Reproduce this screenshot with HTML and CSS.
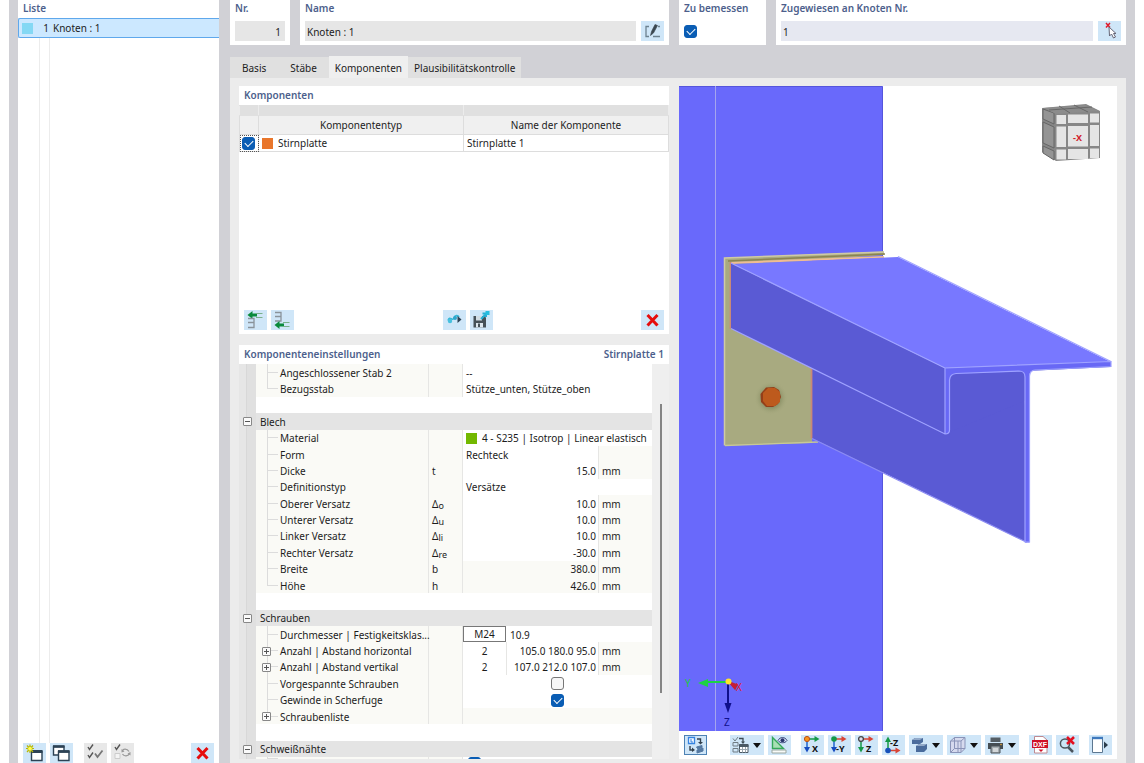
FILE: index.html
```html
<!DOCTYPE html>
<html lang="de">
<head>
<meta charset="utf-8">
<title>Stahlanschluss bearbeiten</title>
<link rel="stylesheet" href="styles.css">
</head>
<body>
<div class="app">
  <aside class="list">
    <h2 class="title">Liste</h2>
    <div class="list-body">
      <button class="list-item" type="button"><span class="swatch swatch-cyan"></span><span class="list-nr">1</span><span class="list-name">Knoten : 1</span></button>
    </div>
    <div class="bar list-bar">
      <button class="tool" type="button" aria-label="Neu"><svg viewBox="0 0 23 20"><path d="M8.500 8.500H19V17.500H8.500z" fill="#fff" stroke="#2c4254" stroke-width="1.400"/><path d="M8 8.500H19.500" stroke="#2c4254" stroke-width="3"/><path d="M7 1.500V10M3 5.500H11M4 2.500L10 9M10 2.500L4 9" stroke="#b8b800" stroke-width="1.200"/><circle cx="7" cy="5.700" r="2.300" fill="#ffff50" stroke="#a9a800" stroke-width=".6"/></svg></button>
      <button class="tool" type="button" aria-label="Kopieren"><svg viewBox="0 0 23 20"><path d="M3.500 3.500H14V12H3.500z" fill="#fff" stroke="#2c4254" stroke-width="1.400"/><path d="M3 3.500H14.500" stroke="#2c4254" stroke-width="2.600"/><path d="M8.500 8.500H19V17.500H8.500z" fill="#fff" stroke="#2c4254" stroke-width="1.400"/><path d="M8 8.500H19.500" stroke="#2c4254" stroke-width="2.800"/></svg></button>
      <button class="tool tool-off push-s" type="button" aria-label="Alle auswählen"><svg viewBox="0 0 23 20"><path d="M4 4L5.500 6.500L9 1.500M4 12L5.500 14.500L9 9.500" fill="none" stroke="#555" stroke-width="1.400"/><path d="M11 10.500L13.500 14L18.500 7.500" fill="none" stroke="#777" stroke-width="1.800"/></svg></button>
      <button class="tool tool-off" type="button" aria-label="Auswahl umkehren"><svg viewBox="0 0 23 20"><path d="M4 4L5.500 6.500L9 1.500" fill="none" stroke="#555" stroke-width="1.400"/><path d="M4 10.500H9V15.500H4z" fill="#f4f4f4" stroke="#ccc"/><path d="M11.500 8C12 5.500 16 5.500 18 8.500M18.500 10.500C17 13.500 13 13.500 11.500 11" fill="none" stroke="#999" stroke-width="1.300"/><path d="M10.500 9.500V6L13.500 8.500zM19.500 9V12.500L16.500 10.500z" fill="#999"/></svg></button>
      <button class="tool push" type="button" aria-label="Löschen"><svg viewBox="0 0 23 20"><path d="M6.500 5L16.500 15.500M16.500 5L6.500 15.500" stroke="#e60d0d" stroke-width="3"/></svg></button>
    </div>
  </aside>

  <main class="main">
    <div class="head">
      <div class="head-left">
        <div class="card field"><label class="title" for="nr">Nr.</label><input id="nr" class="input right" value="1" readonly></div>
        <div class="card field"><label class="title" for="name">Name</label>
          <div class="input-row"><input id="name" class="input" value="Knoten : 1"><button class="tool" type="button" aria-label="Name bearbeiten"><svg viewBox="0 0 23 20"><path d="M8 5.500H5V15.500H8M12 15.500H19" fill="none" stroke="#6d8290" stroke-width="1.300"/><path d="M9.500 14.500L10.500 10.500L14 3.500L16.500 4.500L12.500 12z" fill="#3b4750" stroke="#3b4750" stroke-width=".6"/><path d="M17 5.500H19" stroke="#6d8290" stroke-width="1.300"/></svg></button></div></div>
      </div>
      <div class="head-right">
        <div class="card field"><label class="title" for="bem">Zu bemessen</label><input id="bem" class="check" type="checkbox" checked></div>
        <div class="card field"><label class="title" for="zug">Zugewiesen an Knoten Nr.</label>
          <div class="input-row"><input id="zug" class="input input-blue" value="1"><button class="tool" type="button" aria-label="Knoten wählen"><svg viewBox="0 0 23 20"><path d="M8 2L12 6.500M12 2L8 6.500" stroke="#e01b2b" stroke-width="1.500"/><path d="M11 6L11.500 15L13.500 13L15.500 17L17.500 16L15.500 12.500H18z" fill="#fff" stroke="#667" stroke-width="1"/></svg></button></div></div>
      </div>
    </div>

    <nav class="tabs">
      <button class="tab" type="button">Basis</button><button class="tab" type="button">Stäbe</button><button class="tab tab-on" type="button">Komponenten</button><button class="tab tab-last" type="button">Plausibilitätskontrolle</button>
    </nav>

    <div class="content">
      <div class="left">
        <section class="card comps">
          <h2 class="title">Komponenten</h2>
          <table class="comp-table">
            <colgroup><col class="c-check"><col><col></colgroup>
            <thead>
              <tr class="strip"><td></td><td></td><td></td></tr>
              <tr><th></th><th>Komponententyp</th><th>Name der Komponente</th></tr>
            </thead>
            <tbody><tr><td class="cell-focus"><input class="check" type="checkbox" checked aria-label="Stirnplatte aktiv"></td><td><span class="inline"><span class="swatch swatch-orange"></span>Stirnplatte</span></td><td>Stirnplatte 1</td></tr></tbody>
          </table>
          <div class="bar comp-bar">
            <button class="tool" type="button" aria-label="Oberhalb einfügen"><svg viewBox="0 0 23 20"><path d="M3.500 5L8.500 1V3.500H13V6.500H8.500V9z" fill="#0a8a3c"/><path d="M12 3.500H18.500M12 7.500H18.500" stroke="#7ab08c"/><path d="M4 8.500H10V12.500H4M10 12.500V17.500H4" fill="none" stroke="#8a939a" stroke-width="1.300"/></svg></button>
            <button class="tool" type="button" aria-label="Unterhalb einfügen"><svg viewBox="0 0 23 20"><path d="M4 2.500H10V6.500H4M10 6.500V11H4" fill="none" stroke="#8a939a" stroke-width="1.300"/><path d="M3.500 15L8.500 11V13.500H13V16.500H8.500V19z" fill="#0a8a3c"/><path d="M12 12.500H18.500M12 16.500H18.500" stroke="#7ab08c"/></svg></button>
            <button class="tool push" type="button" aria-label="Übertragen"><svg viewBox="0 0 23 20"><path d="M5 10.500C7 5 9 12 11 8C12 5 15 5 16 7" fill="none" stroke="#35b8d8" stroke-width="1.600"/><circle cx="7" cy="11" r="2.200" fill="#46c0de"/><circle cx="12" cy="8" r="2" fill="#2fa6cc"/><path d="M14.500 6L18.500 9.500L14.500 13z" fill="#2c4254"/></svg></button>
            <button class="tool" type="button" aria-label="Speichern"><svg viewBox="0 0 23 20"><path d="M3.500 6H14.500L16 7.500V17.500H3.500z" fill="#465158"/><path d="M6 6H12V10.500H6z" fill="#d2dde4"/><path d="M6 13H13V17.500H6z" fill="#dde7ee"/><path d="M8 13.500H10V17H8z" fill="#465158"/><path d="M11 9L15 5M12.500 3.500H16V7" fill="none" stroke="#27afd5" stroke-width="2"/><path d="M15.500 1H19.500V5H15.500z" fill="#27bde0"/></svg></button>
            <button class="tool push" type="button" aria-label="Komponente löschen"><svg viewBox="0 0 23 20"><path d="M6.500 5L16.500 15.500M16.500 5L6.500 15.500" stroke="#e60d0d" stroke-width="3"/></svg></button>
          </div>
        </section>

        <section class="card settings">
          <div class="settings-head"><h2 class="title">Komponenteneinstellungen</h2><h2 class="title">Stirnplatte 1</h2></div>
          <div class="settings-body">
            <table class="props">
              <tbody>
              <tr class="row"><td class="gut"></td><th>Angeschlossener Stab 2</th><td class="sym"></td><td class="val wide">--</td></tr>
              <tr class="row end"><td class="gut"></td><th>Bezugsstab</th><td class="sym"></td><td class="val wide">Stütze_unten, Stütze_oben</td></tr>
              <tr class="row blank"><td class="gut"></td></tr>
              <tr class="row group"><td class="gut"><button class="exp" type="button" aria-label="Blech einklappen"></button></td><th>Blech</th></tr>
              <tr class="row"><td class="gut"></td><th>Material</th><td class="sym"></td><td class="val wide"><span class="inline"><span class="swatch swatch-green"></span>4 - S235 | Isotrop | Linear elastisch</span></td></tr>
              <tr class="row"><td class="gut"></td><th>Form</th><td class="sym"></td><td class="val">Rechteck</td><td class="unit"></td></tr>
              <tr class="row"><td class="gut"></td><th>Dicke</th><td class="sym">t</td><td class="val num">15.0</td><td class="unit">mm</td></tr>
              <tr class="row"><td class="gut"></td><th>Definitionstyp</th><td class="sym"></td><td class="val wide">Versätze</td></tr>
              <tr class="row"><td class="gut"></td><th>Oberer Versatz</th><td class="sym">Δ<small>o</small></td><td class="val num">10.0</td><td class="unit">mm</td></tr>
              <tr class="row"><td class="gut"></td><th>Unterer Versatz</th><td class="sym">Δ<small>u</small></td><td class="val num">10.0</td><td class="unit">mm</td></tr>
              <tr class="row"><td class="gut"></td><th>Linker Versatz</th><td class="sym">Δ<small>li</small></td><td class="val num">10.0</td><td class="unit">mm</td></tr>
              <tr class="row"><td class="gut"></td><th>Rechter Versatz</th><td class="sym">Δ<small>re</small></td><td class="val num">-30.0</td><td class="unit">mm</td></tr>
              <tr class="row"><td class="gut"></td><th>Breite</th><td class="sym">b</td><td class="val num locked">380.0</td><td class="unit">mm</td></tr>
              <tr class="row end"><td class="gut"></td><th>Höhe</th><td class="sym">h</td><td class="val num locked">426.0</td><td class="unit">mm</td></tr>
              <tr class="row blank"><td class="gut"></td></tr>
              <tr class="row group"><td class="gut"><button class="exp" type="button" aria-label="Schrauben einklappen"></button></td><th>Schrauben</th></tr>
              <tr class="row pair"><td class="gut"></td><th>Durchmesser | Festigkeitsklas...</th><td class="sym"></td><td class="val mid framed">M24</td><td class="val rest">10.9</td></tr>
              <tr class="row pair"><td class="gut"></td><th><button class="exp plus" type="button" aria-label="Aufklappen"></button>Anzahl | Abstand horizontal</th><td class="sym"></td><td class="val mid">2</td><td class="val num split">105.0 180.0 95.0</td><td class="unit">mm</td></tr>
              <tr class="row pair"><td class="gut"></td><th><button class="exp plus" type="button" aria-label="Aufklappen"></button>Anzahl | Abstand vertikal</th><td class="sym"></td><td class="val mid">2</td><td class="val num split">107.0 212.0 107.0</td><td class="unit">mm</td></tr>
              <tr class="row"><td class="gut"></td><th>Vorgespannte Schrauben</th><td class="sym"></td><td class="val wide mid"><input class="check" type="checkbox" aria-label="Vorgespannte Schrauben"></td></tr>
              <tr class="row"><td class="gut"></td><th>Gewinde in Scherfuge</th><td class="sym"></td><td class="val wide mid"><input class="check" type="checkbox" checked aria-label="Gewinde in Scherfuge"></td></tr>
              <tr class="row end"><td class="gut"></td><th><button class="exp plus" type="button" aria-label="Aufklappen"></button>Schraubenliste</th><td class="sym"></td><td class="val wide locked"></td></tr>
              <tr class="row blank"><td class="gut"></td></tr>
              <tr class="row group"><td class="gut"><button class="exp" type="button" aria-label="Schweißnähte einklappen"></button></td><th>Schweißnähte</th></tr>
              <tr class="row peek"><td class="gut"></td><th></th><td class="sym"></td><td class="val wide"><input class="check" type="checkbox" checked aria-label="Schweißnaht aktiv"></td></tr>
              </tbody>
            </table>
            <div class="scroll"><span class="thumb"></span></div>
          </div>
        </section>
      </div>

      <section class="view">
        <svg class="scene" viewBox="679 86 438 645" preserveAspectRatio="xMinYMin meet" role="img" aria-label="3D-Modell">
          <defs>
            <radialGradient id="shade"><stop offset=".5" stop-color="#70794e" stop-opacity=".6"/><stop offset="1" stop-color="#a8aa80" stop-opacity="0"/></radialGradient>
          </defs>
          <path d="M679 86H882.500V731H679z" fill="#6969fb"/>
          <path d="M679 86.500H882.500V731" fill="none" stroke="#5555dc"/>
          <path d="M715.500 86V731" stroke="#a5a5ee"/>
          <path d="M724 258L884 251.500V255L812 260V443L725 445.500z" fill="#a8aa80"/>
          <path d="M724.500 445.500V258L884 252" fill="none" stroke="#cfcaa4" stroke-width="1.500"/>
          <path d="M728 261L885 254" stroke="#8c8450" stroke-width="1.500"/>
          <path d="M725 445.500L818 442" stroke="#c7c895" stroke-width="1.300"/>
          <path d="M731 263L884 257" stroke="#f0bd92" stroke-width="2"/>
          <path d="M730.500 262V329" stroke="#c98977" stroke-width="1.800"/>
          <circle cx="771" cy="398" r="17" fill="url(#shade)"/>
          <path d="M766 387.500L774 387L779 390L781 397L778 404L773 407H766L761 402L760.500 394z" fill="#943f19"/>
          <path d="M768 388L775 388L780 392V402L775 406H767L763 401V393z" fill="#bd5a1d"/>
          <path d="M812 368L946 434L1024.500 371L1027 542.500L812 438z" fill="#5a5ad4"/>
          <path d="M945 368L1111 361V367L1027 371V400L945 434z" fill="#5a5ad4"/>
          <path d="M811.500 368V438.500" stroke="#c98977" stroke-width="1.800"/>
          <path d="M812 438.500L1026 542" stroke="#8c8cf2" stroke-width="1.200" fill="none"/>
          <path d="M731 263L945 368V434L731 328.500z" fill="#5a5ad4"/>
          <path d="M732 264L898 257L1111 362L945 368z" fill="#7878ff"/>
          <path d="M945 368L1111 361.500V366.500L1034 370Q1029.500 370.500 1029.500 376V542.500H1025V376Q1024.500 371 1020 371.500L956 374Q950 374.500 950 380V431Q949 434 945 434z" fill="#6868f5"/>
          <path d="M731 263L945 368M731 328.500L945 434Q949.500 434 949.500 430V380Q950 374 956 373.500L1019 371Q1025 371 1025 377V542H1029.500V376Q1030 370.500 1035 370L1111 366.500V361.500L945 368V434M898 256.500L1111 361.500" fill="none" stroke="#9fa2ff" stroke-width="1.200"/>
          <g class="gizmo">
            <path d="M1042 108L1086 104L1100 111V158L1056 161L1042 152z" fill="#878787"/>
            <path d="M1043 109L1054 113V124L1043 119zM1043 122L1054 127V148L1043 143zM1043 146L1054 151V160L1043 153z" fill="#949494" stroke="#666"/>
            <path d="M1044 108L1085 105L1099 111L1056 114z" fill="#8c8c8c"/>
            <path d="M1059 106L1070 113M1074 105L1088 112M1049 110L1092 107" stroke="#686868" fill="none"/>
            <path d="M1056.500 115H1066V124H1056.500zM1068 114.500H1088V123H1068zM1090 113.500H1099V122.500H1090zM1056.500 126.500H1066V147H1056.500zM1068 126H1088V146.500H1068zM1090 125H1099V146H1090zM1056.500 149.500H1066V159.500H1056.500zM1068 149H1088V159H1068zM1090 148.500H1099V158H1090z" fill="#e5e5e5"/>
            <text x="1073" y="141" class="gizmo-text">-X</text>
          </g>
          <path d="M729 682H708" stroke="#1cd345" stroke-width="2"/><path d="M698 683L708 679V687z" fill="#1cd345"/>
          <path d="M728 683V704" stroke="#10108c" stroke-width="2"/><path d="M724.500 703H731.500L728 713z" fill="#10108c"/>
          <path d="M729 682L737 685L735 689z" stroke="#c51f36" stroke-width="1.500" fill="#c51f36"/>
          <circle cx="728.500" cy="681.500" r="3" fill="#ffe32e"/>
          <text x="685" y="687" class="ax ax-y">Y</text><text x="736" y="691" class="ax ax-x">X</text><text x="724" y="726" class="ax ax-z">Z</text>
        </svg>
        <div class="bar view-bar">
          <button class="tool tool-framed" type="button" aria-label="Ansicht synchronisieren"><svg viewBox="0 0 23 20"><path d="M4.500 2.500H10.500V8.500H4.500z" fill="#f7fbff" stroke="#3684e0" stroke-width="1.300"/><path d="M7 4V7H9" fill="none" stroke="#3684e0"/><path d="M13 4H16.500V7M6 11V15H9" fill="none" stroke="#33414d" stroke-width="1.400"/><path d="M14 7H19L16.500 9.500zM8 12.500V17L11 15z" fill="#33414d"/><path d="M12.500 12L18 10.500V12.500L14 14zM13 15L19 13V16L13 18z" fill="#5479a2" stroke="#5479a2"/></svg></button>
          <button class="tool tool-drop push-l" type="button" aria-label="Anzeigeoptionen"><svg viewBox="0 0 23 20"><path d="M3 3.500L5 6L8 2M3 7.500H8V11H3zM3 13.500H8V17H3z" fill="none" stroke="#707d85"/><path d="M9 3.500H13V7" fill="none" stroke="#3e4c55" stroke-width="1.300"/><path d="M11 6.500H15L13 9z" fill="#3e4c55"/><path d="M9.500 9.500H18V17.500H9.500z" fill="#fff" stroke="#4a5964"/><path d="M9 9.500H18.500V12H9z" fill="#4a5964"/><path d="M12.500 12V17.500M15.500 12V17.500M9.500 14.500H18" stroke="#9ca8b0"/></svg><i class="arrow"></i></button>
          <button class="tool" type="button" aria-label="Messen"><svg viewBox="0 0 23 20"><path d="M4.500 2.500V13.500H15.500z" fill="#a9e0b5" stroke="#35a85a" stroke-width="1.400"/><path d="M4 15H18V18H4z" fill="#f8faf8" stroke="#9aa7a0"/><path d="M10 5.500C12 1.500 17 1.500 19 5.500C17 8.500 12 8.500 10 5.500z" fill="#dfe7ff" stroke="#39497a"/><circle cx="14.500" cy="5.300" r="2" fill="#29366d"/></svg></button>
          <button class="tool push-m" type="button" aria-label="Ansicht X"><svg viewBox="0 0 23 20"><path d="M6 4.500V13" stroke="#2166d1" stroke-width="1.500"/><path d="M3 12H9L6 17.500z" fill="#174cc0"/><path d="M7 4H15" stroke="#159947" stroke-width="1.500"/><path d="M13.500 1L18.500 4L13.500 7z" fill="#159947"/><circle cx="6" cy="4" r="2.600" fill="#f7941d" stroke="#b9501c"/><text x="11" y="17" class="it">X</text></svg></button>
          <button class="tool" type="button" aria-label="Ansicht -Y"><svg viewBox="0 0 23 20"><path d="M6 4.500V13" stroke="#2166d1" stroke-width="1.500"/><path d="M3 12H9L6 17.500z" fill="#174cc0"/><path d="M7 4H15" stroke="#d94435" stroke-width="1.500"/><path d="M13.500 1L18.500 4L13.500 7z" fill="#d94435"/><circle cx="6" cy="4" r="2.800" fill="#159947"/><text x="8" y="17" class="it">-Y</text></svg></button>
          <button class="tool" type="button" aria-label="Ansicht Z"><svg viewBox="0 0 23 20"><path d="M6 4.500V13" stroke="#159947" stroke-width="1.500"/><path d="M3 12H9L6 17.500z" fill="#159947"/><path d="M7 4H15" stroke="#d94435" stroke-width="1.500"/><path d="M13.500 1L18.500 4L13.500 7z" fill="#d94435"/><circle cx="6" cy="4" r="2.400" fill="#dde" stroke="#444" stroke-width="1.300"/><text x="11" y="17" class="it">Z</text></svg></button>
          <button class="tool" type="button" aria-label="Ansicht -Z"><svg viewBox="0 0 23 20"><path d="M6 14V6" stroke="#159947" stroke-width="1.500"/><path d="M3 7H9L6 1.500z" fill="#159947"/><path d="M7 15.500H15" stroke="#d94435" stroke-width="1.500"/><path d="M13.500 12.500L18.500 15.500L13.500 18.500z" fill="#d94435"/><circle cx="6" cy="15.500" r="2.800" fill="#1750b9"/><text x="8" y="11" class="it">-Z</text></svg></button>
          <button class="tool tool-drop" type="button" aria-label="Darstellung"><svg viewBox="0 0 23 20"><path d="M3 5L6 3H14V7L11 9H3zM7 11L10 9H18V14L15 17H7z" fill="#496b9c"/><path d="M3 5L6 3H14L11 5zM7 11L10 9H18L15 11z" fill="#91a9c9"/></svg><i class="arrow"></i></button>
          <button class="tool tool-drop" type="button" aria-label="Drahtmodell"><svg viewBox="0 0 23 20"><path d="M3.500 6L7.500 2.500H18V13.500L14 17.500H3.500z" fill="#d6daee"/><path d="M3.500 6L7.500 2.500H18V13.500L14 17.500H3.500zM3.500 6H14V17.500M14 6L18 2.500M7.500 2.500V13.500H18M7.500 13.500L3.500 17.500M11 6V17.500" fill="none" stroke="#8a94b8"/></svg><i class="arrow"></i></button>
          <button class="tool tool-drop" type="button" aria-label="Drucken"><svg viewBox="0 0 23 20"><path d="M5.500 2.500H15.500V7H5.500z" fill="#555e65"/><path d="M3 8H18V14H3z" fill="#454d53"/><path d="M6 11H15V18H6z" fill="#a5adb2" stroke="#4b5359"/><path d="M8 14H13M8 16H13" stroke="#fff"/><circle cx="16" cy="9.500" r=".8" fill="#e9a532"/></svg><i class="arrow"></i></button>
          <button class="tool push-m" type="button" aria-label="DXF exportieren"><svg viewBox="0 0 23 20"><path d="M5.500 1.500H14L18 5V18H5.500z" fill="#fff" stroke="#be8990"/><path d="M3 5H19V13H3z" fill="#cf1027"/><text x="4" y="12" class="dxf">DXF</text><path d="M9.500 14.500H14.500L12 17z" fill="#cf1027"/></svg></button>
          <button class="tool" type="button" aria-label="Zoom zurücksetzen"><svg viewBox="0 0 23 20"><circle cx="9" cy="8.500" r="4.600" fill="#cbe5f6" stroke="#4b555d" stroke-width="1.500"/><path d="M12 12L17 17" stroke="#4b555d" stroke-width="2.500"/><path d="M11 2L18 9M18 2L11 9" stroke="#e31021" stroke-width="2.500"/></svg></button>
          <button class="tool push-m" type="button" aria-label="Panel"><svg viewBox="0 0 23 20"><path d="M3.500 2.500H13.500V17.500H3.500z" fill="#fff" stroke="#5c7790"/><path d="M3 3H14" stroke="#3e79bd" stroke-width="2.400"/><path d="M15 6.500L19 10L15 13.500z" fill="#2c3d4c"/></svg></button>
        </div>
      </section>
    </div>
  </main>
</div>
</body>
</html>
```
FILE: styles.css
```css
* { box-sizing: border-box; }
body { margin: 0; background: #fff; color: #1c1c1c; font: 10px/16px "Noto Sans", "Open Sans", sans-serif; }
button, input { font: inherit; color: inherit; margin: 0; padding: 0; border: 0; }
.app { display: flex; gap: 11px; height: 100vh; margin: 0 9px; padding: 0 9px; background: #d1d1d6; overflow: hidden; }
.title { display: block; margin: 0; color: #4d5f8c; font-size: 10px; font-weight: 600; line-height: 16px; }
.card { background: #fff; }

/* node list */
.list { flex: 0 0 201px; display: flex; flex-direction: column; background: #fff; }
.list > .title { padding: 0 5px; height: 18px; }
.list-body { flex: 1; background: linear-gradient(to right, transparent 21px, #ececec 21px 22px, transparent 22px 31px, #ececec 31px 32px, transparent 32px); }
.list-item { display: flex; align-items: center; gap: 4px; width: 100%; height: 20px; padding: 0 3px; background: #cce8ff; border: 1px solid #5fa8ec; border-right: 0; border-radius: 2px 0 0 2px; }
.list-nr { width: 12px; text-align: right; }
.swatch { flex: none; width: 11px; height: 11px; }
.swatch-cyan { background: #84d8f4; }
.swatch-orange { background: #e9762b; }
.swatch-green { background: #73b800; }
.list-bar { padding: 0 5px; height: 20px; }

/* icon buttons */
.bar { display: flex; gap: 4px; }
.tool { flex: none; display: flex; align-items: center; width: 23px; height: 20px; background: #cfe6f8; }
.tool svg { flex: none; display: block; width: 23px; height: 20px; }
.tool-off { background: #e8e8e8; }
.tool-drop { width: 34px; }
.tool-framed { outline: 1px solid #4d82b4; outline-offset: -1px; }
.arrow { border: 4px solid transparent; border-top: 5px solid #111; border-bottom: 0; }
.push { margin-left: auto; }
.push-s { margin-left: 7px; }
.push-m { margin-left: 6px; }
.push-l { margin-left: 19px; }
.it { font: 700 9px "Noto Sans", sans-serif; fill: #111; }
.dxf { font: 700 7px "Liberation Sans", sans-serif; fill: #fff; }

/* header fields */
.main { flex: 1; min-width: 0; display: flex; flex-direction: column; }
.head { display: grid; grid-template-columns: 439fr 447fr; gap: 10px; }
.head-left { display: grid; grid-template-columns: 60px 1fr; gap: 10px; }
.head-right { display: grid; grid-template-columns: 87px 1fr; gap: 10px; }
.field { display: flex; flex-direction: column; gap: 5px; height: 45px; padding: 0 5px; min-width: 0; }
.input { width: 100%; height: 20px; flex: 1 1 auto; max-height: 20px; min-width: 0; padding: 2px 2px 0 2px; background: #e6e6e6; }
.input-blue { background: #e6e8f1; }
.right { text-align: right; padding-right: 4px; }
.input-row { display: flex; gap: 5px; }
.check { appearance: none; flex: none; display: grid; place-items: center; width: 13px; height: 13px; border: 1px solid #777; border-radius: 3px; background: #f7f7f7; }
.check:checked { background: #0a5db4; border-color: #0a5db4; }
.check:checked::after { content: ""; width: 7px; height: 4px; border-left: 1px solid #fff; border-bottom: 1px solid #fff; transform: translateY(-1px) rotate(-45deg); }
.field > .check { margin-top: 4px; }

/* tabs */
.tabs { display: flex; align-items: flex-end; height: 22px; margin-top: 11px; }
.tab { height: 21px; padding: 0 12px; background: #e0e0e0; }
.tab-on { height: 22px; padding: 2px 6px 0; background: #efefef; }
.tab-last { padding: 0 6px; }
.content { flex: 1; min-height: 0; display: grid; grid-template-columns: minmax(0, 430fr) minmax(0, 438fr); gap: 10px; padding: 8px 9px 4px; background: #ececec; }
.left { display: flex; flex-direction: column; gap: 11px; min-height: 0; }

/* component list */
.comps { display: flex; flex-direction: column; height: 248px; }
.comps > .title { padding: 1px 5px; height: 19px; }
.comp-table { width: 100%; table-layout: fixed; border-collapse: collapse; }
.c-check { width: 19px; }
.comp-table td, .comp-table th { height: 17px; padding: 0 3px; border: 1px solid #ddd; font-weight: 400; }
.comp-table th { height: 19px; background: #f0f0f0; }
.comp-table .strip td { height: 10px; background: #e0e0e0; border-color: #e0e0e0 #ececec; line-height: 8px; }
.comp-table .cell-focus { padding: 0 2px; outline: 1px dotted #555; outline-offset: -1px; }
.inline { display: flex; align-items: center; gap: 5px; }
.comp-bar { margin-top: auto; padding: 4px 5px; }

/* property grid */
.settings { flex: 1; min-height: 0; display: flex; flex-direction: column; }
.settings-head { display: flex; justify-content: space-between; height: 19px; padding: 1px 5px; }
.settings-body { flex: 1; min-height: 0; display: flex; background: #efefef; }
.props { flex: 1; min-width: 0; display: flex; flex-direction: column; background: #fff; line-height: 14px; }
.props tbody { display: contents; }
.row { flex: 1 1 0; min-height: 0; display: grid; grid-template-columns: 17px 172px 35px 135px 1fr; }
.row.pair { grid-template-columns: 17px 172px 35px 43px 92px 1fr; }
.row > * { display: flex; align-items: center; min-width: 0; padding: 1px 0 0; font-weight: 400; white-space: nowrap; }
.gut { justify-content: center; background: linear-gradient(to right, #e6e6e6 7px, #d8d8d8 7px 8px, #e0e0e0 8px); }
.row > th { z-index: 1; padding-left: 24px; background: linear-gradient(#dcdcdc, #dcdcdc) 11px 50% / 11px 1px no-repeat, linear-gradient(#dcdcdc, #dcdcdc) 11px 0 / 1px 100% no-repeat, #fafaf6; }
.row.end > th { background: linear-gradient(#dcdcdc, #dcdcdc) 11px 50% / 11px 1px no-repeat, linear-gradient(#dcdcdc, #dcdcdc) 11px 0 / 1px 50% no-repeat, #fafaf6; }
.row.group > th { grid-column: 2 / -1; padding-left: 4px; background: #e4e4e4; }
.row > .sym { padding-left: 3px; border-left: 1px solid #e6e6e4; border-right: 1px solid #e6e6e4; background: #fafaf6; }
.sym small { font-size: 9px; line-height: 9px; padding-top: 3px; }
.row > .val { padding: 1px 3px 0; }
.row > .wide { grid-column: 4 / -1; }
.row > .num { justify-content: flex-end; padding-right: 2px; }
.row > .mid { justify-content: center; }
.row > .split { border-left: 1px solid #e6e6e4; }
.row > .rest { grid-column: 5 / -1; padding-left: 4px; }
.row > .framed { padding-top: 0; border: 1px solid #777; }
.row > .locked { background: #fafaf6; }
.row > .unit { padding-left: 3px; background: #fafaf6; border-left: 1px solid #e6e6e4; }
.row.peek { flex: 0 0 2px; height: 2px; overflow: hidden; }
.row.peek > * { height: 2px; align-items: flex-start; overflow: hidden; padding-top: 0; }
.row.peek > .wide { padding: 0 5px; }
.exp { flex: none; width: 9px; height: 9px; background: linear-gradient(#555, #555) center / 5px 1px no-repeat, #fafafa; border: 1px solid #888; border-radius: 1px; }
.plus { margin: 0 9px 0 -18px; background: linear-gradient(#555, #555) center / 5px 1px no-repeat, linear-gradient(#555, #555) center / 1px 5px no-repeat, #fafafa; }
.scroll { flex: 0 0 17px; display: flex; justify-content: center; padding: 40px 0 66px; }
.thumb { width: 2px; background: #858585; }

/* model view */
.view { display: flex; flex-direction: column; min-height: 0; background: #fff; }
.scene { flex: 1; min-height: 0; width: 100%; }
.view-bar { padding: 4px 5px; }
.gizmo-text { font: 700 9px "Noto Sans", sans-serif; fill: #d2222b; }
.ax { font: 10px "Noto Sans", sans-serif; }
.ax-x { fill: #e0203a; }
.ax-y { fill: #1cc545; }
.ax-z { fill: #10108c; }
```
